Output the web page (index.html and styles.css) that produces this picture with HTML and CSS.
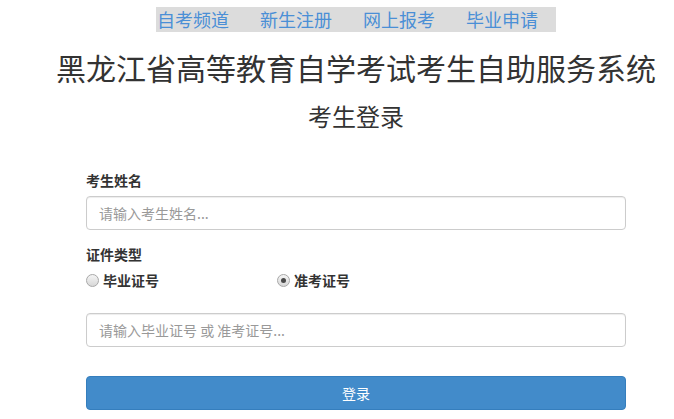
FILE: index.html
```html
<!DOCTYPE html>
<html lang="zh-CN">
<head>
<meta charset="utf-8">
<title>考生登录</title>
<link rel="stylesheet" href="styles.css">
</head>
<body>
<div class="page">
  <nav class="nav">
    <a href="#">自考频道</a>
    <a href="#">新生注册</a>
    <a href="#">网上报考</a>
    <a href="#">毕业申请</a>
  </nav>
  <h1 class="title">黑龙江省高等教育自学考试考生自助服务系统</h1>
  <h2 class="subtitle">考生登录</h2>
  <form class="form">
    <label class="label">考生姓名</label>
    <input class="input" type="text" placeholder="请输入考生姓名...">
    <label class="label label-type">证件类型</label>
    <div class="radios">
      <label class="option option-first"><input class="radio" type="radio" name="t">毕业证号</label>
      <label class="option"><input class="radio" type="radio" name="t" checked>准考证号</label>
    </div>
    <input class="input input-id" type="text" placeholder="请输入毕业证号 或 准考证号...">
    <button class="btn" type="button">登录</button>
  </form>
</div>
</body>
</html>
```

FILE: styles.css
```css
html { overflow: hidden; }
body {
  margin: 0;
  background: #fff;
  color: #333;
  font-family: "Noto Sans CJK SC", "Noto Sans", sans-serif;
}
.page {
  box-sizing: border-box;
  padding-left: 38px;
  display: flex;
  flex-direction: column;
  align-items: center;
}
.nav {
  margin-top: 7px;
  width: 400px;
  height: 25px;
  box-sizing: border-box;
  padding-left: 1px;
  background: #dcdcdc;
  display: flex;
  gap: 31px;
  font-size: 18px;
  line-height: 25px;
}
.nav a {
  color: #4a8fd6;
  text-decoration: none;
  width: 72px;
  white-space: nowrap;
}
.title {
  margin: 20px 0 0;
  font-size: 30px;
  line-height: 30px;
  font-weight: normal;
  color: #333;
  white-space: nowrap;
}
.subtitle {
  margin: 22px 0 0;
  font-size: 24px;
  line-height: 24px;
  font-weight: normal;
  color: #333;
}
.form {
  width: 540px;
  margin-top: 44px;
  display: flex;
  flex-direction: column;
}
.label {
  font-size: 14px;
  line-height: 16px;
  font-weight: bold;
  color: #333;
}
.input {
  margin-top: 8px;
  height: 34px;
  box-sizing: border-box;
  border: 1px solid #ccc;
  border-radius: 4px;
  padding: 0 12px;
  font-size: 14px;
  font-family: inherit;
  color: #555;
  box-shadow: inset 0 1px 1px rgba(0,0,0,0.075);
}
.input::placeholder { color: #999; }
.label-type { margin-top: 16px; }
.radios {
  margin-top: 10px;
  display: flex;
  font-size: 14px;
  line-height: 17px;
  font-weight: bold;
}
.option {
  display: flex;
  align-items: center;
}
.option-first { width: 191px; }
.radio {
  appearance: none;
  -webkit-appearance: none;
  margin: 0 4px 0 0;
  width: 13px;
  height: 13px;
  border: 1px solid #a8a8a8;
  border-radius: 50%;
  box-sizing: border-box;
  background: linear-gradient(#f4f4f4, #d8d8d8);
  position: relative;
}
.radio:checked::after {
  content: "";
  position: absolute;
  left: 3px;
  top: 3px;
  width: 5px;
  height: 5px;
  border-radius: 50%;
  background: #4a4a4a;
}
.input-id { margin-top: 24px; }
.btn {
  margin-top: 29px;
  height: 34px;
  border: 1px solid #357ebd;
  border-radius: 4px;
  background: #428bca;
  color: #fff;
  font-size: 14px;
  font-family: inherit;
}
```
